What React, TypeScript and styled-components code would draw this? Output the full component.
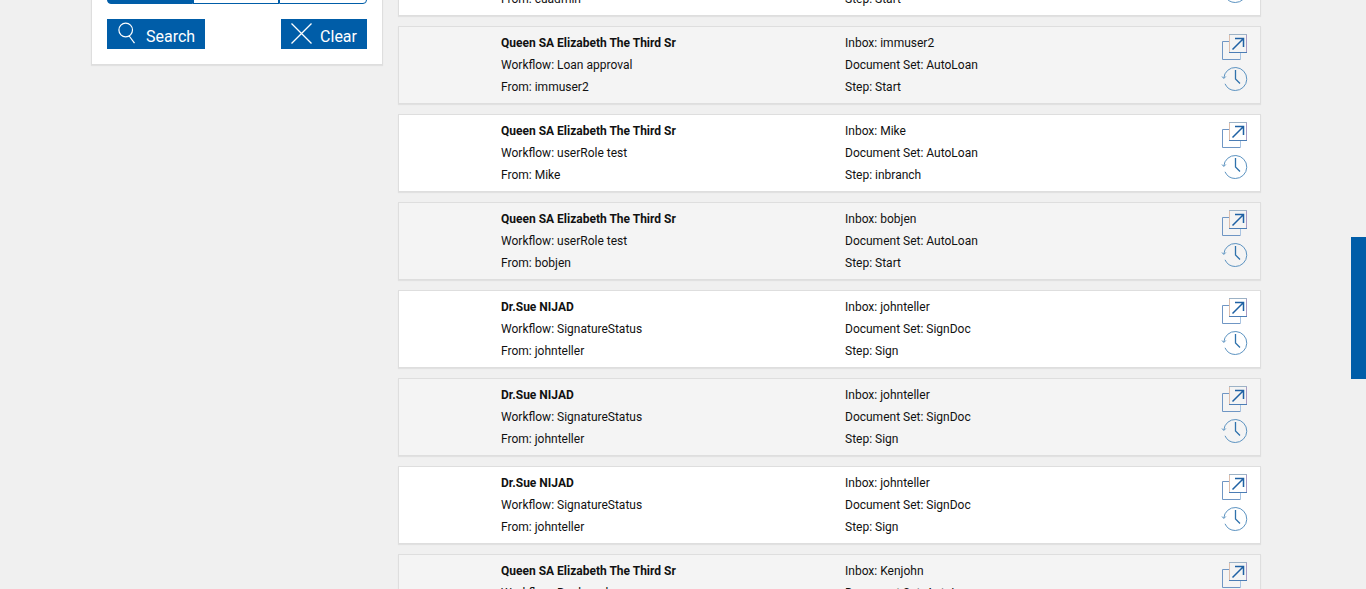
import React from "react";
import styled, { createGlobalStyle } from "styled-components";

const BLUE = "#005da8";

const GlobalStyle = createGlobalStyle`
  *, *::before, *::after { box-sizing: border-box; }
  body {
    margin: 0;
    background: #f0f0f0;
    color: #111;
    font-family: Roboto, "Liberation Sans", sans-serif;
    font-size: 12px;
    line-height: 22px;
  }
`;

const Viewport = styled.div`
  height: 100vh;
  overflow: hidden;
  padding-right: 14px;
`;

const Columns = styled.main`
  display: flex;
  align-items: flex-start;
  gap: 15px;
  max-width: 1170px;
  margin: -62px auto 0;
`;

const FilterPanel = styled.form`
  flex: 0 0 292px;
  padding: 31px 15px 15px;
  background: #fff;
  border: 1px solid #dedede;
  box-shadow: 0 1px 1px rgba(0, 0, 0, 0.06);
`;

const Segments = styled.div`
  display: flex;
`;

const Segment = styled.button<{ $active?: boolean }>`
  flex: 0 0 33%;
  height: 34px;
  padding: 0;
  border: 1px solid ${BLUE};
  font: inherit;
  color: ${(p) => (p.$active ? "#fff" : BLUE)};
  background: ${(p) => (p.$active ? BLUE : "#fff")};
  & + &:not(:last-child) { border-left: 0; border-right: 0; }
  &:first-child { border-radius: 4px 0 0 4px; }
  &:last-child { flex: 1; border-radius: 0 4px 4px 0; }
`;

const Actions = styled.div`
  display: flex;
  justify-content: space-between;
  margin-top: 15px;
`;

const ActionButton = styled.button`
  display: flex;
  align-items: flex-start;
  gap: 8px;
  height: 30px;
  padding: 3px 10px;
  border: 0;
  background: ${BLUE};
  color: #fff;
  font: 400 16px/30px Roboto, "Liberation Sans", sans-serif;
  cursor: pointer;
`;

const List = styled.ul`
  flex: 1;
  min-width: 0;
  display: flex;
  flex-direction: column;
  gap: 10px;
  margin: 0;
  padding: 0;
  list-style: none;
`;

const Card = styled.li`
  display: flex;
  padding: 5px 12px 5px 102px;
  background: #fff;
  border: 1px solid #dedede;
  box-shadow: 0 1px 1px rgba(0, 0, 0, 0.06);
  &:nth-child(even) { background: #f4f4f4; }
`;

const Details = styled.div<{ $wide?: boolean }>`
  flex: ${(p) => (p.$wide ? "1 1 0" : "0 1 344px")};
  min-width: 0;
`;

const Name = styled.div`
  font-weight: 700;
`;

const Line = styled.div`
  white-space: nowrap;
`;

const CardTools = styled.div`
  display: flex;
  flex-direction: column;
  gap: 4px;
  padding-top: 1px;
`;

const ToolButton = styled.button`
  width: 28px;
  height: 28px;
  padding: 0;
  border: 0;
  background: none;
  cursor: pointer;
  svg { display: block; }
`;

const SideTab = styled.button`
  position: fixed;
  top: 237px;
  right: 0;
  width: 15px;
  height: 142px;
  padding: 0;
  border: 0;
  background: ${BLUE};
`;

const SearchIcon = () => (
  <svg width="21" height="24" viewBox="0 0 21 24" fill="none" stroke="#fff" strokeWidth="1.2" aria-hidden="true">
    <circle cx="8.7" cy="8" r="6.8" />
    <path d="M12.2 14 L17.5 21.2" />
  </svg>
);

const ClearIcon = () => (
  <svg width="21" height="24" viewBox="0 0 21 24" fill="none" stroke="#fff" strokeWidth="1.3" aria-hidden="true">
    <path d="M0.5 1.5 L20.5 21.5 M20.5 1.5 L0.5 21.5" />
  </svg>
);

const OpenIcon = () => (
  <svg width="28" height="28" viewBox="0 0 28 28" fill="none" aria-hidden="true">
    <path d="M9 8.5 H2.5 V26.5 H20.5" stroke="#6f96c4" />
    <path d="M20.5 26 V20" stroke="#a9c4e2" />
    <path d="M9.5 2 V19" stroke="#dcbfae" />
    <path d="M9 1.5 H27" stroke="#9cb2c6" />
    <path d="M26.5 2 V19" stroke="#a99bc4" />
    <path d="M9 19.5 H27" stroke="#4b7db5" />
    <path d="M12.5 16.5 L23 6 M15 5.5 H23.5 V14" stroke="#1f61a4" strokeWidth="1.5" />
  </svg>
);

const HistoryIcon = () => (
  <svg width="28" height="28" viewBox="0 0 28 28" fill="none" aria-hidden="true">
    <path d="M3.8 13 A11.5 11.5 0 1 1 15.3 25.5 A11.5 11.5 0 0 1 5 18.8" stroke="#5c93c1" />
    <path d="M2 11.5 L3.8 13.5 L5.8 11.5" stroke="#5c93c1" />
    <path d="M15.5 5 V14 L20 18.5" stroke="#2f72ac" strokeWidth="1.3" />
  </svg>
);

interface Item {
  name: string;
  workflow: string;
  from: string;
  inbox: string;
  documents: string;
  step: string;
}

const queen = "Queen SA Elizabeth The Third Sr";
const signing: Item = {
  name: "Dr.Sue NIJAD",
  workflow: "SignatureStatus",
  from: "johnteller",
  inbox: "johnteller",
  documents: "SignDoc",
  step: "Sign",
};

const items: Item[] = [
  { name: queen, workflow: "Loan approval", from: "cuadmin", inbox: "cuadmin", documents: "AutoLoan", step: "Start" },
  { name: queen, workflow: "Loan approval", from: "immuser2", inbox: "immuser2", documents: "AutoLoan", step: "Start" },
  { name: queen, workflow: "userRole test", from: "Mike", inbox: "Mike", documents: "AutoLoan", step: "inbranch" },
  { name: queen, workflow: "userRole test", from: "bobjen", inbox: "bobjen", documents: "AutoLoan", step: "Start" },
  signing,
  signing,
  signing,
  { name: queen, workflow: "Bookmark", from: "Kenjohn", inbox: "Kenjohn", documents: "AutoLoan", step: "Start" },
];

export default function App() {
  return (
    <Viewport>
      <GlobalStyle />
      <Columns>
        <FilterPanel onSubmit={(e) => e.preventDefault()}>
          <Segments role="group" aria-label="Scope">
            <Segment type="button" $active aria-label="All" />
            <Segment type="button" aria-label="Sent" />
            <Segment type="button" aria-label="Received" />
          </Segments>
          <Actions>
            <ActionButton type="submit"><SearchIcon />Search</ActionButton>
            <ActionButton type="reset"><ClearIcon />Clear</ActionButton>
          </Actions>
        </FilterPanel>
        <List>
          {items.map((item, i) => (
            <Card key={i}>
              <Details>
                <Name>{item.name}</Name>
                <Line>Workflow: {item.workflow}</Line>
                <Line>From: {item.from}</Line>
              </Details>
              <Details $wide>
                <Line>Inbox: {item.inbox}</Line>
                <Line>Document Set: {item.documents}</Line>
                <Line>Step: {item.step}</Line>
              </Details>
              <CardTools>
                <ToolButton type="button" aria-label="Open"><OpenIcon /></ToolButton>
                <ToolButton type="button" aria-label="History"><HistoryIcon /></ToolButton>
              </CardTools>
            </Card>
          ))}
        </List>
      </Columns>
      <SideTab type="button" aria-label="Open side panel" />
    </Viewport>
  );
}
